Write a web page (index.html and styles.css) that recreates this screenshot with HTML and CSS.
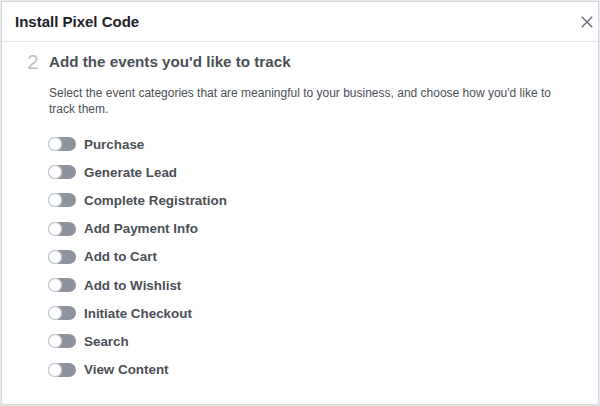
FILE: index.html
```html
<!DOCTYPE html>
<html lang="en">
<head>
    <meta charset="UTF-8">
    <title>Install Pixel Code</title>
    <link rel="stylesheet" href="styles.css">
</head>
<body>
    <div class="dialog">
        <div class="dialog-header">
            <span class="dialog-title">Install Pixel Code</span>
            <svg class="close" width="12" height="12" viewBox="0 0 12 12">
                <path d="M0.8 0.8 L11.2 11.2 M11.2 0.8 L0.8 11.2" stroke="#606770" stroke-width="1.3" fill="none"/>
            </svg>
        </div>
        <div class="dialog-body">
            <div class="step">
                <span class="step-num">2</span>
                <div class="step-content">
                    <h2 class="step-title">Add the events you'd like to track</h2>
                    <p class="step-desc">Select the event categories that are meaningful to your business, and choose how you'd like to track them.</p>
                    <ul class="events">
                        <li class="event"><span class="toggle"></span>Purchase</li>
                        <li class="event"><span class="toggle"></span>Generate Lead</li>
                        <li class="event"><span class="toggle"></span>Complete Registration</li>
                        <li class="event"><span class="toggle"></span>Add Payment Info</li>
                        <li class="event"><span class="toggle"></span>Add to Cart</li>
                        <li class="event"><span class="toggle"></span>Add to Wishlist</li>
                        <li class="event"><span class="toggle"></span>Initiate Checkout</li>
                        <li class="event"><span class="toggle"></span>Search</li>
                        <li class="event"><span class="toggle"></span>View Content</li>
                    </ul>
                </div>
            </div>
        </div>
    </div>
</body>
</html>
```

FILE: styles.css
```css
* {
    box-sizing: border-box;
}
body {
    margin: 0;
    background-color: #e9eaed;
    font-family: "Liberation Sans", Arial, sans-serif;
    padding: 1px;
    height: 406px;
}
.dialog {
    background-color: #fff;
    border: 1px solid #d5d7db;
    height: 404px;
    display: flex;
    flex-direction: column;
}
.dialog-header {
    height: 40px;
    border-bottom: 1px solid #e5e5e5;
    display: flex;
    align-items: center;
    justify-content: space-between;
    padding: 0 5px 0 13px;
}
.dialog-title {
    font-size: 15px;
    font-weight: bold;
    color: #1d2129;
}
.close {
    display: block;
}
.step {
    display: flex;
    padding: 9px 0 0 25px;
}
.step-num {
    font-size: 21px;
    font-weight: 300;
    color: #bec2c9;
    width: 22px;
    flex-shrink: 0;
    line-height: 22px;
}
.step-title {
    margin: 0;
    font-size: 15.2px;
    font-weight: bold;
    color: #4b4f56;
    line-height: 22px;
}
.step-desc {
    margin: 12px 0 0 0;
    font-size: 12px;
    line-height: 16px;
    color: #4b4f56;
    padding-right: 40px;
}
.events {
    list-style: none;
    margin: 13px 0 0 0;
    padding: 0;
}
.event {
    display: flex;
    align-items: center;
    height: 28.2px;
    font-size: 13.4px;
    font-weight: bold;
    color: #4b4f56;
}
.toggle {
    position: relative;
    flex-shrink: 0;
    width: 28px;
    height: 14px;
    border-radius: 7px;
    background-color: #8d949e;
    margin: 0 8px 0 -1px;
}
.toggle::after {
    content: "";
    position: absolute;
    left: 0;
    top: 0;
    width: 14px;
    height: 14px;
    border-radius: 50%;
    background-color: #fff;
    box-shadow: 0 0 0 1px #bec2c9 inset;
}
```
